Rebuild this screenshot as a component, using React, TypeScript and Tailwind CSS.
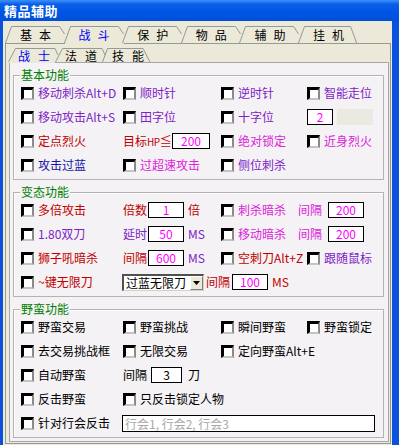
import React from "react";

const P = "text-[#7e22c8]";
const R = "text-[#c00000]";
const M = "text-[#dc22dc]";
const B = "text-[#1414a8]";
const K = "text-black";

function CB() {
  return (
    <span className="box-border inline-block w-[13px] h-[13px] shrink-0 bg-white border-solid border-t-[3px] border-l-[3px] border-r-2 border-b-2 border-t-black border-l-black border-r-[#8a8a8a] border-b-[#c4c4c4]" />
  );
}

function Item({ label, c, className = "" }: { label: string; c: string; className?: string }) {
  return (
    <div className={"flex items-center gap-[4px] whitespace-nowrap " + className}>
      <CB />
      <span className={c}>{label}</span>
    </div>
  );
}

function Box({ v, className }: { v: string; className: string }) {
  return (
    <span
      className={
        "box-border inline-flex items-center justify-center bg-white border border-black h-[16px] text-[#ff00ff] leading-[14px] shrink-0 " +
        className
      }
    >
      {v}
    </span>
  );
}

function Row({ children }: { children: React.ReactNode }) {
  return <div className="grid grid-cols-[102px_98px_86px_1fr] h-[24px] items-center">{children}</div>;
}

function Group({ title, className = "", children }: { title: string; className?: string; children: React.ReactNode }) {
  return (
    <div
      className={
        "relative border border-[#b4b2b4] shadow-[inset_1px_1px_0_#ffffff] pt-[5px] pb-[2px] pl-[7px] " + className
      }
    >
      <span className="absolute -top-[8px] left-[6px] px-[1px] bg-[#f4f2f4] text-[#008000] leading-[14px]">
        {title}
      </span>
      {children}
    </div>
  );
}

function OuterTab({ label, selected, last }: { label: string; selected?: boolean; last?: boolean }) {
  const W = 58.6;
  return (
    <div className="relative w-[58.6px] h-[17px] flex items-center pl-[15px] shrink-0">
      <svg className="absolute left-0 top-0 overflow-visible" width={W} height={17}>
        {selected && <line x1={1} y1={17.5} x2={W + 1} y2={17.5} stroke="#ece9d8" strokeWidth={1} />}
        <polyline
          points={last ? `0.5,17 6.5,0.5 ${W - 6},0.5 ${W},17` : `0.5,17 6.5,0.5 ${W - 4},0.5 ${W + 1},8`}
          fill="none"
          stroke="#919b9c"
          strokeWidth={1}
        />
      </svg>
      <span
        className={
          "relative tracking-[7px] leading-[15px] whitespace-nowrap " + (selected ? "text-[#0000ff]" : "text-black")
        }
      >
        {label}
      </span>
    </div>
  );
}

function SubTab({ label, selected, last }: { label: string; selected?: boolean; last?: boolean }) {
  const W = 47;
  return (
    <div className="relative w-[47px] h-[14px] flex items-center pl-[10px] shrink-0">
      <svg className="absolute left-0 top-0 overflow-visible" width={W} height={14}>
        {selected && <line x1={1} y1={14.5} x2={W} y2={14.5} stroke="#ece9d8" strokeWidth={1} />}
        <polyline
          points={last ? `0.5,14 5.5,0.5 41,0.5 48,14` : `0.5,14 7.5,0.5 ${W},0.5 ${W + 3},7`}
          fill="none"
          stroke="#919b9c"
          strokeWidth={1}
        />
      </svg>
      <span
        className={
          "relative tracking-[8px] leading-[13px] whitespace-nowrap " + (selected ? "text-[#0000ff]" : "text-black")
        }
      >
        {label}
      </span>
    </div>
  );
}

export default function App() {
  return (
    <div className="w-[399px] h-[445px] overflow-hidden flex flex-col bg-[#0a52dc] font-['Noto_Sans_CJK_SC','Liberation_Sans',sans-serif] text-[12px] leading-[14px]">
      <div className="h-[21px] shrink-0 flex items-center pl-[4px] bg-[linear-gradient(to_bottom,#3d8ff8_0%,#0a5fe9_20%,#0055e5_55%,#004fda_100%)]">
        <span className="text-white font-bold text-[13px] leading-[15px] tracking-[0.5px]">精品辅助</span>
      </div>
      <div className="flex-1 ml-[3px] mr-[7px] bg-[#ece9d8] pt-[5px] pl-[2px] pr-[1px]">
        <div className="relative z-10 flex h-[17px]">
          <OuterTab label="基本" />
          <OuterTab label="战斗" selected />
          <OuterTab label="保护" />
          <OuterTab label="物品" />
          <OuterTab label="辅助" />
          <OuterTab label="挂机" last />
        </div>
        <div className="border border-[#919b9c] pt-[4px] pl-[3px] pr-[1px] pb-[1px]">
          <div className="relative z-10 flex h-[14px] -ml-px">
            <SubTab label="战士" selected />
            <SubTab label="法道" />
            <SubTab label="技能" last />
          </div>
          <div className="border border-[#a7a6aa] bg-[#f4f2f4] pt-[12px] pl-[3px] pr-[4px] pb-[3px]">
            <Group title="基本功能">
              <Row>
                <Item label="移动刺杀Alt+D" c={P} />
                <Item label="顺时针" c={P} />
                <Item label="逆时针" c={P} />
                <Item label="智能走位" c={P} />
              </Row>
              <Row>
                <Item label="移动攻击Alt+S" c={P} />
                <Item label="田字位" c={P} />
                <Item label="十字位" c={P} />
                <div className="flex items-center">
                  <Box v="2" className="w-[26px]" />
                  <span className="ml-[4px] w-[36px] h-[16px] bg-[#ebe9e0]" />
                </div>
              </Row>
              <Row>
                <Item label="定点烈火" c={R} />
                <div className="flex items-center">
                  <span className={R + " w-[49px] whitespace-nowrap"}>
                    目标<span className="text-[10px] tracking-[-0.5px]">HP</span>≦
                  </span>
                  <Box v="200" className="w-[38px]" />
                </div>
                <Item label="绝对锁定" c={M} />
                <Item label="近身烈火" c={M} />
              </Row>
              <Row>
                <Item label="攻击过蓝" c={B} />
                <Item label="过超速攻击" c={M} />
                <Item label="侧位刺杀" c={P} />
                <span />
              </Row>
            </Group>

            <Group title="变态功能" className="mt-[12px]">
              <Row>
                <Item label="多倍攻击" c={R} />
                <div className="flex items-center">
                  <span className={R + " w-[25px]"}>倍数</span>
                  <Box v="1" className="w-[36px]" />
                  <span className={R + " ml-[4px]"}>倍</span>
                </div>
                <div className="col-span-2 flex items-center">
                  <Item label="刺杀暗杀" c={M} className="w-[77px]" />
                  <span className={M + " w-[30px]"}>间隔</span>
                  <Box v="200" className="w-[36px]" />
                </div>
              </Row>
              <Row>
                <Item label="1.80双刀" c={P} />
                <div className="flex items-center">
                  <span className={P + " w-[25px]"}>延时</span>
                  <Box v="50" className="w-[36px]" />
                  <span className={P + " ml-[4px]"}>MS</span>
                </div>
                <div className="col-span-2 flex items-center">
                  <Item label="移动暗杀" c={M} className="w-[77px]" />
                  <span className={M + " w-[30px]"}>间隔</span>
                  <Box v="200" className="w-[36px]" />
                </div>
              </Row>
              <Row>
                <Item label="狮子吼暗杀" c={R} />
                <div className="flex items-center">
                  <span className={R + " w-[25px]"}>间隔</span>
                  <Box v="600" className="w-[36px]" />
                  <span className={P + " ml-[4px]"}>MS</span>
                </div>
                <Item label="空刺刀Alt+Z" c={R} />
                <Item label="跟随鼠标" c={P} />
              </Row>
              <Row>
                <Item label="~键无限刀" c={R} />
                <div className="col-span-3 flex items-center">
                  <div className="box-border -ml-px w-[82px] h-[17px] flex bg-white border-solid border-t-2 border-l-2 border-r border-b border-t-[#505050] border-l-[#505050] border-r-[#d4d0c8] border-b-[#d4d0c8]">
                    <span className="flex-1 pl-[2px] text-black whitespace-nowrap leading-[13px]">过蓝无限刀</span>
                    <span className="box-border w-[13px] h-full flex items-center justify-center bg-[#ece9d8] border-solid border-t border-l border-r border-b border-t-white border-l-white border-r-[#808080] border-b-[#808080]">
                      <svg width="7" height="4" viewBox="0 0 7 4">
                        <polygon points="0,0 7,0 3.5,4" fill="#000" />
                      </svg>
                    </span>
                  </div>
                  <span className={R + " ml-[2px] w-[24px]"}>间隔</span>
                  <Box v="100" className="ml-[2px] w-[36px]" />
                  <span className={R + " ml-[4px]"}>MS</span>
                </div>
              </Row>
            </Group>

            <Group title="野蛮功能" className="mt-[12px]">
              <Row>
                <Item label="野蛮交易" c={K} />
                <Item label="野蛮挑战" c={K} />
                <Item label="瞬间野蛮" c={K} />
                <Item label="野蛮锁定" c={K} />
              </Row>
              <Row>
                <Item label="去交易挑战框" c={K} />
                <Item label="无限交易" c={K} />
                <Item label="定向野蛮Alt+E" c={K} className="col-span-2" />
              </Row>
              <Row>
                <Item label="自动野蛮" c={K} />
                <div className="col-span-3 flex items-center">
                  <span className="text-black w-[28px]">间隔</span>
                  <Box v="3" className="w-[31px] !text-black" />
                  <span className="text-black ml-[6px]">刀</span>
                </div>
              </Row>
              <Row>
                <Item label="反击野蛮" c={K} />
                <Item label="只反击锁定人物" c={K} className="col-span-3" />
              </Row>
              <Row>
                <Item label="针对行会反击" c={K} />
                <div className="col-span-3 flex items-center">
                  <span className="box-border -ml-px w-[253px] h-[17px] bg-white border border-black pl-[2px] text-[#a8a8a8] leading-[15px] whitespace-nowrap">
                    行会1, 行会2, 行会3
                  </span>
                </div>
              </Row>
            </Group>
          </div>
        </div>
      </div>
    </div>
  );
}
